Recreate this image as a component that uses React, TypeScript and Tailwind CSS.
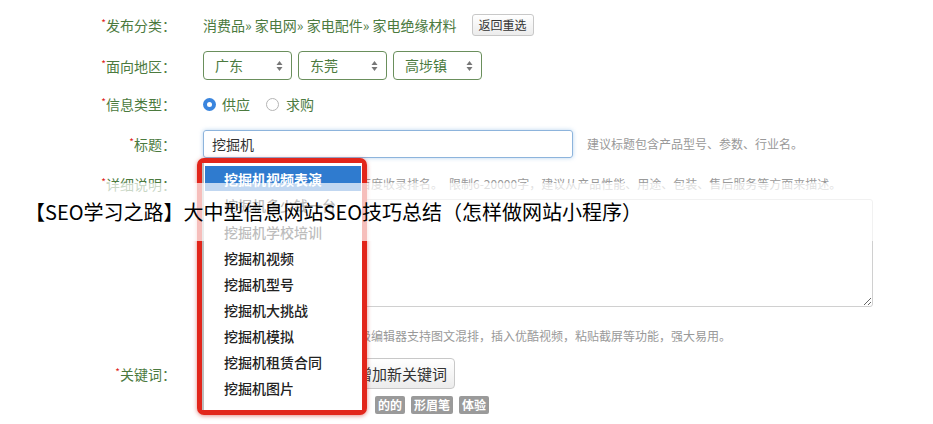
import React from "react";

const FONT = '"Noto Sans CJK SC", "Noto Sans", sans-serif';

function Label({ text, star = true }: { text: string; star?: boolean }) {
  return (
    <div className="w-[176px] shrink-0 text-right text-[14px] text-[#4b7a3e] leading-none">
      {star && <span className="text-[#e0231a] text-[10px] align-top">*</span>}
      {text}：
    </div>
  );
}

function Select({ text }: { text: string }) {
  return (
    <div className="flex h-[29px] w-[89px] items-center justify-between rounded-[4px] border border-[#6a8f5c] bg-white pl-[11px] pr-[8px] text-[14px] text-[#4b7a3e]">
      <span>{text}</span>
      <svg width="7" height="12" viewBox="0 0 7 12">
        <path d="M3.5 1 L6.5 5 L0.5 5 Z" fill="#777" />
        <path d="M3.5 11 L6.5 7 L0.5 7 Z" fill="#777" />
      </svg>
    </div>
  );
}

function Tag({ text }: { text: string }) {
  return (
    <span className="rounded-[2px] bg-[#9a9a9a] px-[3px] py-[1px] text-[12px] font-bold text-white leading-[16px]">
      {text}
    </span>
  );
}

const items = [
  "挖掘机学校培训",
  "挖掘机视频",
  "挖掘机型号",
  "挖掘机大挑战",
  "挖掘机模拟",
  "挖掘机租赁合同",
  "挖掘机图片",
];

export default function App() {
  return (
    <div
      className="relative h-[424px] w-[933px] overflow-hidden bg-white"
      style={{ fontFamily: FONT }}
    >
      <div className="flex flex-col pt-[13px]">
        {/* Row 1 */}
        <div className="flex h-[24px] items-center">
          <Label text="发布分类" />
          <div className="ml-[27px] flex items-center text-[14px] text-[#4b7a3e]">
            <span>消费品» 家电网» 家电配件» 家电绝缘材料</span>
            <button className="ml-[15px] h-[22px] rounded-[3px] border border-[#c8c8c8] bg-gradient-to-b from-white to-[#ececec] px-[6px] text-[12px] text-[#333] leading-none">
              返回重选
            </button>
          </div>
        </div>
        {/* Row 2 */}
        <div className="mt-[14px] flex h-[29px] items-center">
          <Label text="面向地区" />
          <div className="ml-[27px] flex gap-[6px]">
            <Select text="广东" />
            <Select text="东莞" />
            <Select text="高埗镇" />
          </div>
        </div>
        {/* Row 3 */}
        <div className="mt-[12px] flex h-[24px] items-center">
          <Label text="信息类型" />
          <div className="ml-[27px] flex items-center text-[14px] text-[#4b7a3e]">
            <span className="flex h-[13px] w-[13px] items-center justify-center rounded-full bg-[#3a85de]">
              <span className="h-[5px] w-[5px] rounded-full bg-white" />
            </span>
            <span className="ml-[6px]">供应</span>
            <span className="ml-[16px] h-[13px] w-[13px] rounded-full border border-[#b5b5b5] bg-white" />
            <span className="ml-[7px]">求购</span>
          </div>
        </div>
        {/* Row 4 */}
        <div className="mt-[14px] flex h-[28px] items-center">
          <Label text="标题" />
          <div className="ml-[27px] flex h-[28px] w-[370px] items-center rounded-[3px] border border-[#8db4dc] pl-[8px] text-[14px] text-[#333] shadow-[0_0_4px_rgba(100,160,220,0.45)]">
            挖掘机
          </div>
          <span className="ml-[14px] text-[12px] text-[#999]">建议标题包含产品型号、参数、行业名。</span>
        </div>
        {/* Row 5 */}
        <div className="mt-[17px] flex h-[18px] items-center">
          <Label text="详细说明" />
          <span className="ml-[27px] text-[12px] text-[#999] whitespace-nowrap">
            详细的产品描述将有助于提高百度收录排名。
            <span className="ml-[6px]">限制6-20000字，建议从产品性能、用途、包装、售后服务等方面来描述。</span>
          </span>
        </div>
        <div className="mt-[6px] flex">
          <div className="w-[176px] shrink-0" />
          <textarea
            className="ml-[27px] h-[108px] w-[670px] rounded-[3px] border border-[#d0d0d0] outline-none"
            readOnly
          />
        </div>
        <div className="mt-[20px] flex h-[18px] items-center">
          <div className="w-[176px] shrink-0" />
          <span className="ml-[27px] text-[12px] text-[#999] whitespace-nowrap">
            小提示：详细说明栏采用了超级编辑器支持图文混排，插入优酷视频，粘贴截屏等功能，强大易用。
          </span>
        </div>
        {/* Keyword */}
        <div className="mt-[13px] flex h-[31px] items-center">
          <Label text="关键词" />
          <div className="ml-[27px] h-[31px] w-[140px] rounded-[3px] border border-[#ccc]" />
          <button className="ml-[6px] h-[31px] rounded-[4px] border border-[#c8c8c8] bg-gradient-to-b from-white to-[#ececec] px-[7px] text-[15px] text-[#333] leading-none">
            增加新关键词
          </button>
        </div>
        <div className="mt-[7px] flex h-[18px] items-center">
          <div className="w-[176px] shrink-0" />
          <span className="ml-[27px] w-[172px] text-[12px] text-[#999] whitespace-nowrap">(请填写关键词，如：钢材)</span>
          <div className="flex gap-[6px]">
            <Tag text="的的" />
            <Tag text="形眉笔" />
            <Tag text="体验" />
          </div>
        </div>
      </div>

      {/* Autocomplete dropdown with red annotation frame */}
      <div className="absolute left-[197px] top-[158px] h-[257px] w-[170px] rounded-[7px] border-[5px] border-[#e2261b] bg-white shadow-[0_1px_4px_rgba(200,30,20,0.5)]">
        <div className="h-full w-full border-l-2 border-[#bdbdbd] bg-white pt-[3px]">
          <div className="ml-[1px] mr-[1px] flex h-[25px] items-center bg-[#2f7bcf] pl-[19px] pt-[2px] text-[14px] font-bold text-white">
            挖掘机视频表演
          </div>
          <div className="flex h-[27px] items-center pl-[20px] pt-[2px] text-[14px] font-medium text-[#222]">
            挖掘机多少钱一台
          </div>
          {items.map((t) => (
            <div key={t} className="flex h-[26px] items-center pl-[20px] pt-[2px] text-[14px] font-medium text-[#222]">
              {t}
            </div>
          ))}
        </div>
      </div>

      {/* Caption overlay band */}
      <div className="absolute left-0 top-[183px] flex h-[58px] w-full items-center bg-white/70 pl-[25px]">
        <span className="text-[20px] text-black whitespace-nowrap" style={{ fontFamily: FONT }}>
          【SEO学习之路】大中型信息网站SEO技巧总结（怎样做网站小程序）
        </span>
      </div>
    </div>
  );
}
